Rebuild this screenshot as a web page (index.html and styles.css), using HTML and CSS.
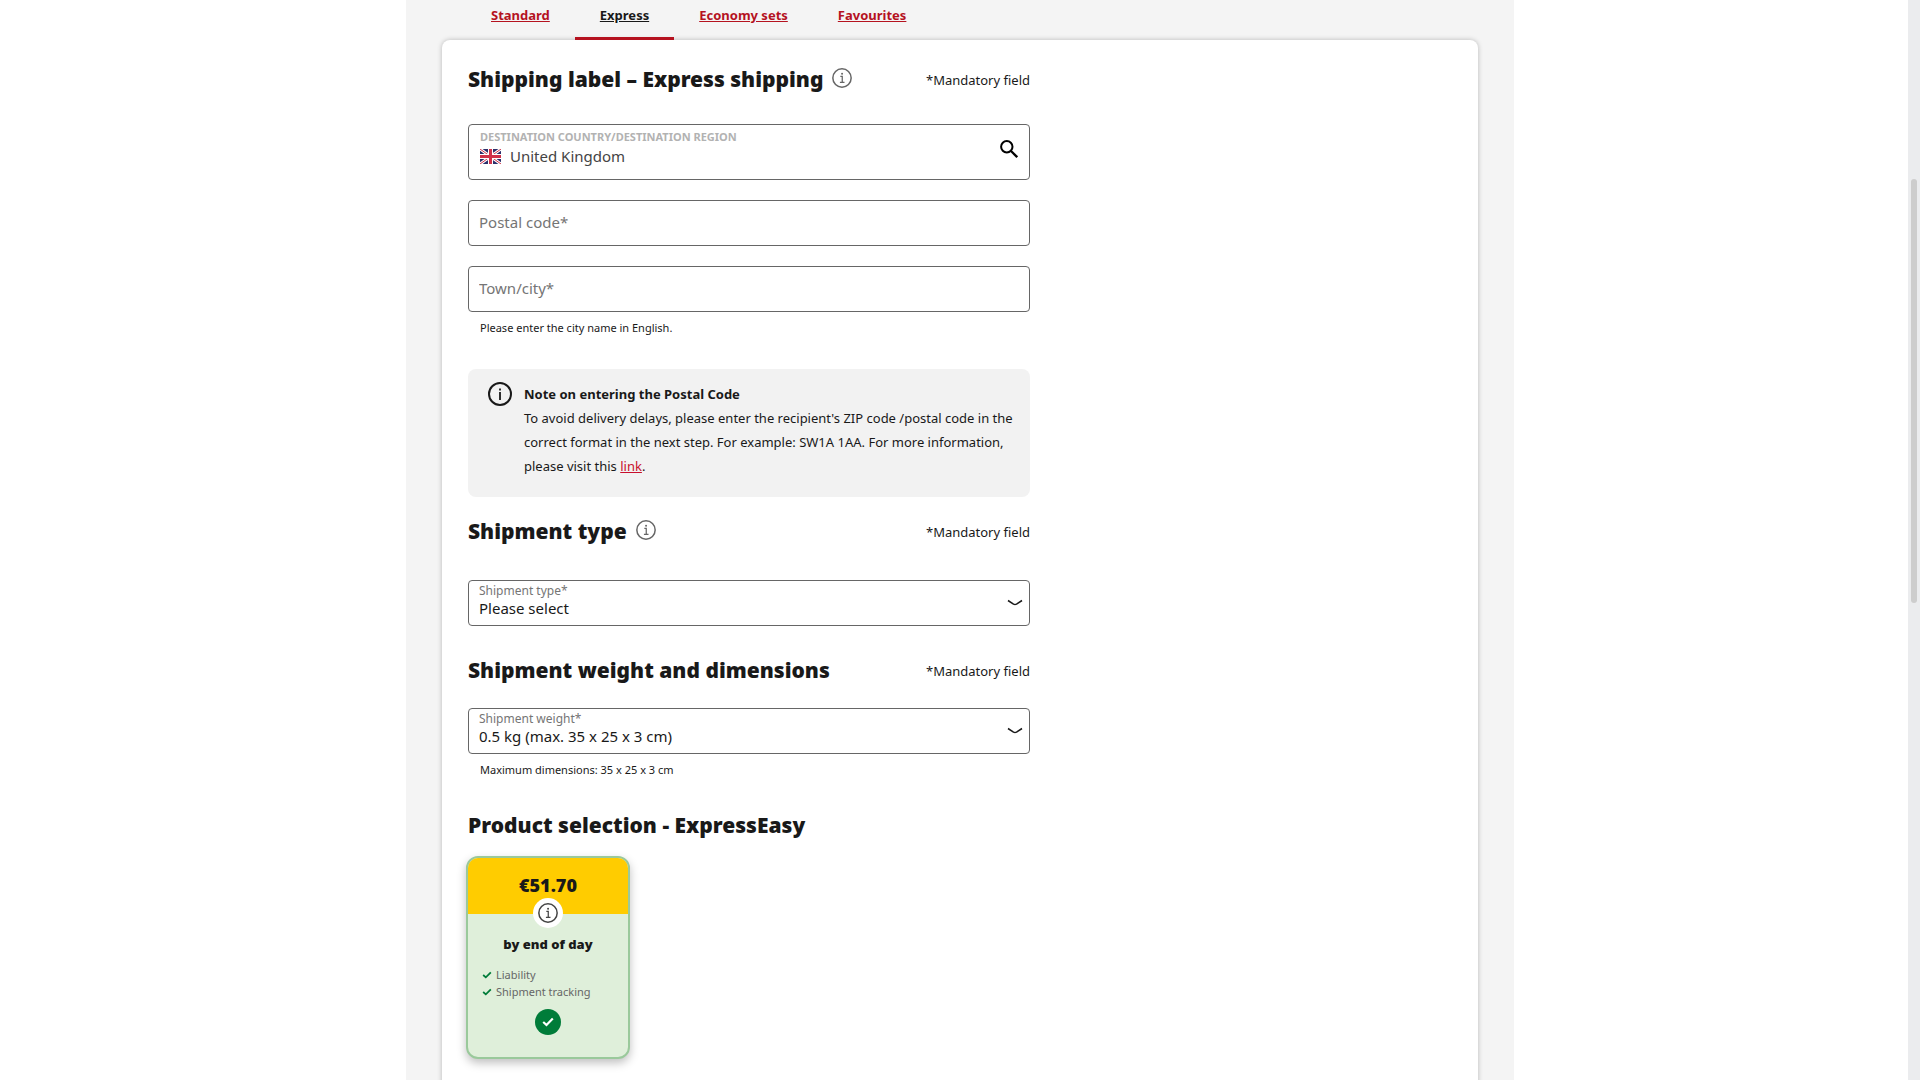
FILE: index.html
```html
<!DOCTYPE html>
<html lang="en">
<head>
    <meta charset="utf-8">
    <title>Shipping label – Express shipping</title>
    <link rel="stylesheet" href="styles.css">
</head>
<body>

<svg class="sprite" aria-hidden="true">
    <symbol id="info" viewBox="0 0 24 24">
        <circle cx="12" cy="12" r="11" fill="none" stroke="currentColor" stroke-width="1.8"/>
        <path d="M10 10h2.3v7M9.5 17.2h5.5" fill="none" stroke="currentColor" stroke-width="1.5"/>
        <circle cx="12.1" cy="6.8" r="1.2" fill="currentColor"/>
    </symbol>
    <symbol id="check" viewBox="0 0 12 10">
        <path d="M1.2 5l3.3 3 6.3-6.4" fill="none" stroke="currentColor" stroke-width="2.2"/>
    </symbol>
    <symbol id="chevron" viewBox="0 0 16 8">
        <path d="M1 1.5l5.5 3.6q1.5 .8 3 0L15 1.5" fill="none" stroke="currentColor" stroke-width="1.5"/>
    </symbol>
</svg>

<div class="page">
    <nav class="tabs">
        <a class="tab" href="#standard">Standard</a>
        <a class="tab active" href="#express">Express</a>
        <a class="tab" href="#economy">Economy sets</a>
        <a class="tab" href="#favourites">Favourites</a>
    </nav>

    <main class="panel">
        <form class="form">
            <section class="destination">
                <div class="section-head">
                    <h2>Shipping label – Express shipping</h2>
                    <button class="info-button" type="button" aria-label="Information"><svg><use href="#info"/></svg></button>
                    <span class="mandatory">*Mandatory field</span>
                </div>

                <div class="country-field">
                    <div class="country-text">
                        <label for="country">DESTINATION COUNTRY/DESTINATION REGION</label>
                        <div class="country-value">
                            <svg class="flag" viewBox="0 0 21 15">
                                <rect width="21" height="15" fill="#2b2f6b"/>
                                <path d="M0 0l21 15M21 0L0 15" stroke="#fff" stroke-width="3"/>
                                <path d="M0 0l21 15M21 0L0 15" stroke="#d0314a" stroke-width="1"/>
                                <path d="M10.5 0v15M0 7.5h21" stroke="#fff" stroke-width="5"/>
                                <path d="M10.5 0v15M0 7.5h21" stroke="#d0314a" stroke-width="3"/>
                            </svg>
                            <input id="country" type="text" value="United Kingdom">
                        </div>
                    </div>
                    <button class="search-button" type="button" aria-label="Search">
                        <svg viewBox="0 0 18 18"><circle cx="6.8" cy="6.8" r="5.7" fill="none" stroke="currentColor" stroke-width="2"/><path d="M11 11l6.2 6.2" stroke="currentColor" stroke-width="2.3"/></svg>
                    </button>
                </div>

                <input class="text-field" type="text" placeholder="Postal code*" aria-label="Postal code">
                <input class="text-field" type="text" placeholder="Town/city*" aria-label="Town/city">
                <p class="hint">Please enter the city name in English.</p>
            </section>

            <div class="note">
                <svg class="note-icon" viewBox="0 0 24 24">
                    <circle cx="12" cy="12" r="11" fill="none" stroke="currentColor" stroke-width="2"/>
                    <path d="M12 10v8M12 6.5v2" stroke="currentColor" stroke-width="1.8"/>
                </svg>
                <div class="note-text">
                    <strong>Note on entering the Postal Code</strong>
                    <p>To avoid delivery delays, please enter the recipient's ZIP code /postal code in the correct format in the next step. For example: SW1A 1AA. For more information, please visit this <a href="#postal">link</a>.</p>
                </div>
            </div>

            <section class="type">
                <div class="section-head">
                    <h2>Shipment type</h2>
                    <button class="info-button" type="button" aria-label="Information"><svg><use href="#info"/></svg></button>
                    <span class="mandatory">*Mandatory field</span>
                </div>
                <div class="select-field">
                    <label for="type">Shipment type*</label>
                    <select id="type"><option>Please select</option></select>
                    <svg class="chevron"><use href="#chevron"/></svg>
                </div>
            </section>

            <section class="weight">
                <div class="section-head">
                    <h2>Shipment weight and dimensions</h2>
                    <span class="mandatory">*Mandatory field</span>
                </div>
                <div class="select-field">
                    <label for="weight">Shipment weight*</label>
                    <select id="weight"><option>0.5 kg (max. 35 x 25 x 3 cm)</option></select>
                    <svg class="chevron"><use href="#chevron"/></svg>
                </div>
                <p class="hint">Maximum dimensions: 35 x 25 x 3 cm</p>
            </section>

            <section class="products">
                <div class="section-head">
                    <h2>Product selection - ExpressEasy</h2>
                </div>
                <div class="product">
                    <div class="price">€51.70
                        <button class="price-info" type="button" aria-label="Information"><svg><use href="#info"/></svg></button>
                    </div>
                    <h3>by end of day</h3>
                    <ul>
                        <li><svg><use href="#check"/></svg>Liability</li>
                        <li><svg><use href="#check"/></svg>Shipment tracking</li>
                    </ul>
                    <div class="selected"><svg><use href="#check"/></svg></div>
                </div>
            </section>
        </form>
    </main>
</div>

<div class="scroll-track"><div class="scroll-thumb"></div></div>

</body>
</html>
```
FILE: styles.css
```css
* {
    box-sizing: border-box;
}
body {
    margin: 0;
    height: 100vh;
    overflow: hidden;
    background: #fff;
    color: #191919;
    font-family: "Noto Sans", "Open Sans", sans-serif;
    font-size: 13px;
}
h2, h3, p, ul {
    margin: 0;
    padding: 0;
}
button {
    padding: 0;
    border: 0;
    background: none;
    color: inherit;
    cursor: pointer;
}
input, select {
    font-family: inherit;
    font-size: 15px;
    color: inherit;
}
.sprite {
    display: none;
}
.page {
    max-width: 1108px;
    min-height: 100vh;
    margin: 0 auto;
    padding: 0 36px;
    background: #f4f4f4;
}
.tabs {
    display: flex;
    height: 40px;
    padding-left: 24px;
}
.tab {
    padding: 3px 25px 0;
    line-height: 24px;
    font-size: 13px;
    font-weight: 700;
    color: #b5121f;
}
.tab.active {
    color: #191919;
    border-bottom: 3px solid #b5121f;
}
.panel {
    min-height: 100vh;
    padding: 20px 26px;
    background: #fff;
    border-radius: 8px;
    box-shadow: 0 0 5px rgba(0, 0, 0, 0.25);
}
.form {
    max-width: 562px;
}
.section-head {
    display: flex;
    align-items: center;
    height: 40px;
}
.section-head h2 {
    padding-bottom: 2px;
    font-size: 21px;
    font-weight: 900;
    line-height: 32px;
}
.info-button {
    display: flex;
    margin: 0 0 4px 9px;
    color: #666;
}
.info-button svg, .price-info svg {
    width: 20px;
    height: 20px;
}
.mandatory {
    margin-left: auto;
}
.country-field {
    display: flex;
    justify-content: space-between;
    height: 56px;
    margin-top: 24px;
    padding: 3px 11px;
    border: 1px solid #666;
    border-radius: 4px;
}
.country-text {
    display: flex;
    flex: 1;
    flex-direction: column;
}
.country-text label {
    font-size: 11px;
    font-weight: 700;
    line-height: 18px;
    color: #b2b2b2;
}
.country-value {
    display: flex;
    align-items: center;
    height: 20px;
}
.country-value input {
    flex: 1;
    padding: 0;
    border: 0;
    outline: none;
    color: #444;
}
.flag {
    width: 21px;
    height: 15px;
    margin-right: 9px;
}
.search-button {
    display: flex;
    padding-top: 12px;
    color: #000;
}
.search-button svg {
    width: 18px;
    height: 18px;
}
.text-field {
    display: block;
    width: 100%;
    height: 46px;
    margin-top: 20px;
    padding: 0 10px 2px;
    border: 1px solid #666;
    border-radius: 4px;
    background: #fff;
}
.text-field::placeholder {
    color: #757575;
}
.hint {
    margin: 8px 12px 0;
    font-size: 11px;
    line-height: 16px;
}
.note {
    display: flex;
    gap: 12px;
    margin-top: 33px;
    padding: 13px 12px 19px 20px;
    background: #f2f2f2;
    border-radius: 8px;
    line-height: 24px;
}
.note-icon {
    flex: none;
    width: 24px;
    height: 24px;
}
.note a {
    color: #c8102e;
}
.type {
    margin-top: 15px;
}
.select-field {
    position: relative;
    height: 46px;
}
.type .select-field {
    margin-top: 28px;
}
.weight {
    margin-top: 25px;
}
.weight .select-field {
    margin-top: 17px;
}
.select-field label {
    position: absolute;
    top: 3px;
    left: 11px;
    font-size: 12px;
    line-height: 16px;
    color: #757575;
}
.select-field select {
    width: 100%;
    height: 46px;
    padding: 9px 10px 0;
    appearance: none;
    border: 1px solid #666;
    border-radius: 4px;
    background: transparent;
}
.chevron {
    position: absolute;
    top: 19px;
    right: 7px;
    width: 16px;
    height: 8px;
    pointer-events: none;
}
.products {
    margin-top: 28px;
}
.product {
    width: 164px;
    height: 203px;
    margin: 10px 0 0 -2px;
    overflow: hidden;
    background: #dfefda;
    border: 2px solid #9ac99b;
    border-radius: 12px;
    box-shadow: 0 4px 10px rgba(0, 0, 0, 0.25);
    text-align: center;
}
.price {
    position: relative;
    height: 56px;
    background: #fc0;
    font-size: 18px;
    font-weight: 900;
    line-height: 54px;
}
.price-info {
    position: absolute;
    left: 50%;
    bottom: -14px;
    display: flex;
    align-items: center;
    justify-content: center;
    width: 30px;
    height: 30px;
    margin-left: -15px;
    border-radius: 50%;
    background: #fff;
    color: #444;
}
.product h3 {
    margin-top: 20px;
    font-size: 13px;
    font-weight: 900;
    line-height: 20px;
}
.product ul {
    margin: 12px 0 0 14px;
    list-style: none;
    text-align: left;
    font-size: 11px;
    line-height: 17px;
    color: #666;
}
.product li {
    display: flex;
    align-items: center;
    gap: 4px;
}
.product li svg {
    width: 10px;
    height: 8px;
    color: #007c39;
}
.selected {
    display: flex;
    align-items: center;
    justify-content: center;
    width: 26px;
    height: 26px;
    margin: 9px auto 0;
    border-radius: 50%;
    background: #007c39;
    color: #fff;
}
.selected svg {
    width: 12px;
    height: 10px;
}
.scroll-track {
    position: fixed;
    top: 0;
    right: 0;
    width: 12px;
    height: 100%;
    padding: 179px 3px 0;
    background: #ebecee;
}
.scroll-thumb {
    height: 424px;
    border-radius: 3px;
    background: #cdcdcd;
}
```
